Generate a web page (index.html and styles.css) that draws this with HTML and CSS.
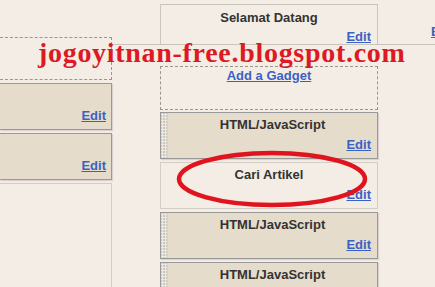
FILE: index.html
```html
<!DOCTYPE html>
<html lang="en">
<head>
    <meta charset="UTF-8">
    <meta name="viewport" content="width=device-width, initial-scale=1.0">
    <title>Page Elements</title>
    <link rel="stylesheet" href="styles.css">
</head>
<body>
    <div class="layout">
        <!-- sidebar kiri -->
        <div class="col col-left">
            <div class="drop-zone drop-left"></div>
            <div class="widget widget-left">
                <div class="widget-body">
                    <span class="widget-title"></span>
                    <a href="#" class="edit">Edit</a>
                </div>
            </div>
            <div class="widget widget-left">
                <div class="widget-body">
                    <span class="widget-title"></span>
                    <a href="#" class="edit">Edit</a>
                </div>
            </div>
            <div class="plain-box"></div>
        </div>

        <!-- sidebar tengah -->
        <div class="col col-mid">
            <div class="header-box">
                <span class="widget-title">Selamat Datang</span>
                <a href="#" class="edit">Edit</a>
            </div>
            <div class="drop-zone drop-mid">
                <a href="#" class="add-link">Add a Gadget</a>
            </div>
            <div class="widget">
                <div class="grip"></div>
                <div class="widget-body">
                    <span class="widget-title">HTML/JavaScript</span>
                    <a href="#" class="edit">Edit</a>
                </div>
            </div>
            <div class="widget widget-light">
                <div class="widget-body">
                    <span class="widget-title">Cari Artikel</span>
                    <a href="#" class="edit">Edit</a>
                </div>
            </div>
            <div class="widget">
                <div class="grip"></div>
                <div class="widget-body">
                    <span class="widget-title">HTML/JavaScript</span>
                    <a href="#" class="edit">Edit</a>
                </div>
            </div>
            <div class="widget">
                <div class="grip"></div>
                <div class="widget-body">
                    <span class="widget-title">HTML/JavaScript</span>
                    <a href="#" class="edit">Edit</a>
                </div>
            </div>
        </div>

        <!-- header kanan -->
        <div class="col col-right">
            <a href="#" class="edit">Edit</a>
        </div>
    </div>

    <!-- watermark dan lingkaran -->
    <div class="watermark">jogoyitnan-free.blogspot.com</div>
    <svg class="circle-mark" width="200" height="62" viewBox="0 0 200 62">
        <ellipse cx="97" cy="30" rx="93" ry="26" fill="none" stroke="#e0141e" stroke-width="4.5"/>
    </svg>
</body>
</html>
```

FILE: styles.css
```css
body {
    margin: 0;
    width: 435px;
    height: 287px;
    overflow: hidden;
    font-family: "Liberation Sans", Arial, sans-serif;
    font-size: 13px;
    line-height: 15px;
    color: #333;
    /* garis bawah header */
    background: linear-gradient(#c9c4bc, #c9c4bc) 0 44px / 100% 1px no-repeat, #f4ede5;
    position: relative;
}

.layout {
    display: flex;
    align-items: flex-start;
}

.col {
    display: flex;
    flex-direction: column;
    box-sizing: border-box;
}

.col-left {
    width: 112px;
    padding-top: 37px;
    flex: none;
}

.col-mid {
    width: 218px;
    margin-left: 48px;
    padding-top: 4px;
    flex: none;
}

.col-right {
    padding: 24px 0 0 53px;
    white-space: nowrap;
}

.edit {
    color: #3a62c4;
    font-weight: bold;
    text-decoration: underline;
    align-self: flex-end;
}

.widget-title {
    font-weight: bold;
    text-align: center;
    min-height: 15px;
}

.drop-zone {
    box-sizing: border-box;
    border: 1px dashed #9a958f;
    background: #f4ede5;
}

.drop-left {
    height: 43px;
    border-left: none;
    margin-bottom: 3px;
}

.drop-mid {
    height: 44px;
    margin-bottom: 2px;
    padding-top: 1px;
    text-align: center;
}

.add-link {
    color: #3a62c4;
    font-weight: bold;
}

.header-box {
    box-sizing: border-box;
    height: 41px;
    border: 1px solid #c9c4bc;
    padding: 5px 6px 0;
    display: flex;
    flex-direction: column;
    justify-content: space-between;
    margin-bottom: 21px;
}

.widget {
    box-sizing: border-box;
    height: 47px;
    border: 1px solid #999;
    background: #e5dccb;
    display: flex;
    margin-bottom: 3px;
    box-shadow: 1px 1px 1px rgba(120, 100, 140, 0.2);
}

.widget-left {
    border-left: none;
}

.widget-light {
    background: #f4ede5;
    border-color: #d3cdc5;
    box-shadow: none;
}

.grip {
    width: 6px;
    flex: none;
    background-color: #cfcac1;
    background-image: radial-gradient(circle, #f5f1ea 0.9px, transparent 1.2px);
    background-size: 3px 3px;
    border-right: 1px solid #d9d2c5;
}

.widget-body {
    flex: 1;
    display: flex;
    flex-direction: column;
    justify-content: space-between;
    padding: 4px 6px 6px;
}

.widget-left .widget-body {
    padding-right: 5px;
}

.plain-box {
    box-sizing: border-box;
    height: 120px;
    border: 1px solid #d3cdc5;
    border-left: none;
}

.watermark {
    position: absolute;
    left: 38px;
    top: 39px;
    font-family: "Liberation Serif", "Times New Roman", serif;
    font-weight: bold;
    font-size: 28px;
    line-height: 28px;
    letter-spacing: 0.7px;
    color: #dd1a24;
    white-space: nowrap;
}

.circle-mark {
    position: absolute;
    left: 175px;
    top: 149px;
}
```
